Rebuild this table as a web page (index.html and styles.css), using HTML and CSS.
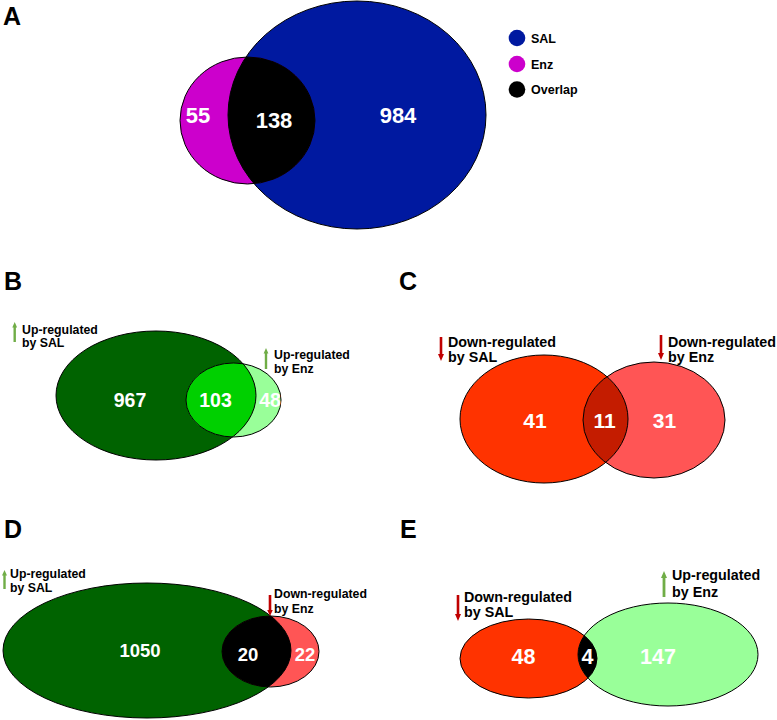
FILE: index.html
```html
<!DOCTYPE html>
<html>
<head>
<meta charset="utf-8">
<link rel="stylesheet" href="styles.css">
</head>
<body>
<div class="figure">
  <section class="panel panel-a">
    <div class="letter letter-a">A</div>
    <svg class="plot" viewBox="0 0 777 255" width="777" height="255">
      <defs>
        <clipPath id="clipA"><ellipse cx="357" cy="115" rx="129" ry="114"/></clipPath>
      </defs>
      <ellipse class="sal-blue" cx="357" cy="115" rx="129" ry="114"/>
      <ellipse class="enz-magenta" cx="247.5" cy="120.5" rx="67.5" ry="63.5"/>
      <ellipse class="ov-black" clip-path="url(#clipA)" cx="247.5" cy="120.5" rx="67.5" ry="63.5"/>
      <ellipse class="edge" cx="357" cy="115" rx="129" ry="114"/>
      <ellipse class="edge" cx="247.5" cy="120.5" rx="67.5" ry="63.5"/>
      <text class="num num-a" x="198" y="123">55</text>
      <text class="num num-a" x="274" y="128">138</text>
      <text class="num num-a" x="398" y="123">984</text>
      <circle class="sal-blue" cx="517" cy="38" r="8.3"/>
      <circle class="enz-magenta" cx="517" cy="64" r="8.3"/>
      <circle class="ov-black" cx="517" cy="89.5" r="8.3"/>
      <text class="legend" x="531" y="43">SAL</text>
      <text class="legend" x="531" y="69">Enz</text>
      <text class="legend" x="531" y="94">Overlap</text>
    </svg>
  </section>

  <section class="panel panel-b">
    <div class="letter letter-b">B</div>
    <svg class="plot" viewBox="0 255 390 248" width="390" height="248">
      <defs>
        <clipPath id="clipB"><ellipse cx="156" cy="395.5" rx="100" ry="64.5"/></clipPath>
      </defs>
      <ellipse class="dark-green" cx="156" cy="395.5" rx="100" ry="64.5"/>
      <ellipse class="light-green" cx="233.5" cy="400" rx="47.5" ry="37"/>
      <ellipse class="bright-green" clip-path="url(#clipB)" cx="233.5" cy="400" rx="47.5" ry="37"/>
      <ellipse class="edge" cx="156" cy="395.5" rx="100" ry="64.5"/>
      <ellipse class="edge" cx="233.5" cy="400" rx="47.5" ry="37"/>
      <text class="num num-b" x="130" y="407">967</text>
      <text class="num num-b" x="215.5" y="407">103</text>
      <text class="num num-b" x="270" y="407">48</text>
      <path class="arrow-up" d="M13.5 342V327.5H12.3L14.7 322L17.1 327.5H15.9V342Z"/>
      <text class="label label-s"><tspan x="22" y="334">Up-regulated</tspan><tspan x="22" y="347">by SAL</tspan></text>
      <path class="arrow-up" d="M264.8 369V353.5H263.6L266 348L268.4 353.5H267.2V369Z"/>
      <text class="label label-s"><tspan x="274" y="359">Up-regulated</tspan><tspan x="274" y="373">by Enz</tspan></text>
    </svg>
  </section>

  <section class="panel panel-c">
    <div class="letter letter-c">C</div>
    <svg class="plot" viewBox="390 255 387 248" width="387" height="248">
      <defs>
        <clipPath id="clipC"><ellipse cx="544" cy="419" rx="84" ry="64"/></clipPath>
      </defs>
      <ellipse class="red" cx="544" cy="419" rx="84" ry="64"/>
      <ellipse class="pink" cx="654" cy="420" rx="71" ry="58"/>
      <ellipse class="dark-red" clip-path="url(#clipC)" cx="654" cy="420" rx="71" ry="58"/>
      <ellipse class="edge" cx="544" cy="419" rx="84" ry="64"/>
      <ellipse class="edge" cx="654" cy="420" rx="71" ry="58"/>
      <text class="num num-c" x="535" y="428">41</text>
      <text class="num num-c" x="604.5" y="428">11</text>
      <text class="num num-c" x="664.5" y="428">31</text>
      <path class="arrow-down" d="M439.7 337V354H438L441 361L444 354H442.3V337Z"/>
      <text class="label label-l"><tspan x="448" y="347">Down-regulated</tspan><tspan x="448" y="362">by SAL</tspan></text>
      <path class="arrow-down" d="M659.7 335V353H658L661 360L664 353H662.3V335Z"/>
      <text class="label label-l"><tspan x="668" y="347">Down-regulated</tspan><tspan x="668" y="362">by Enz</tspan></text>
    </svg>
  </section>

  <section class="panel panel-d">
    <div class="letter letter-d">D</div>
    <svg class="plot" viewBox="0 503 390 217" width="390" height="217">
      <defs>
        <clipPath id="clipD"><ellipse cx="147" cy="650.5" rx="144" ry="67.5"/></clipPath>
      </defs>
      <ellipse class="dark-green" cx="147" cy="650.5" rx="144" ry="67.5"/>
      <ellipse class="pink" cx="270.5" cy="651.5" rx="48.5" ry="35.5"/>
      <ellipse class="ov-black" clip-path="url(#clipD)" cx="270.5" cy="651.5" rx="48.5" ry="35.5"/>
      <ellipse class="edge" cx="147" cy="650.5" rx="144" ry="67.5"/>
      <ellipse class="edge" cx="270.5" cy="651.5" rx="48.5" ry="35.5"/>
      <text class="num num-d" x="140" y="657">1050</text>
      <text class="num num-d" x="248" y="661">20</text>
      <text class="num num-d" x="305" y="661">22</text>
      <path class="arrow-up" d="M3.3 589V575.5H2L4.5 570L7 575.5H5.7V589Z"/>
      <text class="label label-s"><tspan x="10" y="578">Up-regulated</tspan><tspan x="10" y="592">by SAL</tspan></text>
      <path class="arrow-down" d="M268.7 595V610H267.2L270 616L272.8 610H271.3V595Z"/>
      <text class="label label-s"><tspan x="274" y="598">Down-regulated</tspan><tspan x="274" y="613">by Enz</tspan></text>
    </svg>
  </section>

  <section class="panel panel-e">
    <div class="letter letter-e">E</div>
    <svg class="plot" viewBox="390 503 387 217" width="387" height="217">
      <defs>
        <clipPath id="clipE"><ellipse cx="528.5" cy="658.5" rx="68.5" ry="39.5"/></clipPath>
      </defs>
      <ellipse class="red" cx="528.5" cy="658.5" rx="68.5" ry="39.5"/>
      <ellipse class="light-green" cx="668" cy="654.5" rx="90" ry="51.5"/>
      <ellipse class="ov-black" clip-path="url(#clipE)" cx="668" cy="654.5" rx="90" ry="51.5"/>
      <ellipse class="edge" cx="528.5" cy="658.5" rx="68.5" ry="39.5"/>
      <ellipse class="edge" cx="668" cy="654.5" rx="90" ry="51.5"/>
      <text class="num num-e" x="523.5" y="664">48</text>
      <text class="num num-e" x="587.5" y="664">4</text>
      <text class="num num-e" x="658" y="664">147</text>
      <path class="arrow-down" d="M456.7 595V614H455L458 621L461 614H459.3V595Z"/>
      <text class="label label-l"><tspan x="464" y="602">Down-regulated</tspan><tspan x="464" y="617">by SAL</tspan></text>
      <path class="arrow-up" d="M662.6 597V578H661L664 571L667 578H665.4V597Z"/>
      <text class="label label-l"><tspan x="672" y="580">Up-regulated</tspan><tspan x="672" y="597">by Enz</tspan></text>
    </svg>
  </section>
</div>
</body>
</html>
```

FILE: styles.css
```css
html, body {
  margin: 0;
  padding: 0;
  background: #ffffff;
}

.figure {
  width: 777px;
  height: 720px;
  display: grid;
  grid-template-columns: 390px 387px;
  grid-template-rows: 255px 248px 217px;
  font-family: "Liberation Sans", Arial, sans-serif;
  overflow: hidden;
}

.panel {
  display: grid;
  min-width: 0;
  min-height: 0;
}

.panel > * {
  grid-area: 1 / 1;
}

.panel-a {
  grid-column: 1 / 3;
}

.plot {
  display: block;
  overflow: visible;
}

.letter {
  font-size: 25px;
  line-height: 25px;
  font-weight: bold;
  color: #000;
  align-self: start;
  justify-self: start;
  z-index: 1;
}

.letter-a { padding: 4px 0 0 3px; }
.letter-b { padding: 14px 0 0 4px; }
.letter-c { padding: 14px 0 0 9px; }
.letter-d { padding: 14px 0 0 4px; }
.letter-e { padding: 14px 0 0 10px; }

.sal-blue { fill: #0019a0; }
.enz-magenta { fill: #cc00cc; }
.ov-black { fill: #000000; }
.dark-green { fill: #006300; }
.light-green { fill: #99ff99; }
.bright-green { fill: #00d000; }
.red { fill: #ff3300; }
.pink { fill: #ff5555; }
.dark-red { fill: #c41c00; }

.edge {
  fill: none;
  stroke: #000;
  stroke-width: 1;
}

.num {
  fill: #ffffff;
  font-family: "Liberation Sans", Arial, sans-serif;
  font-weight: bold;
  text-anchor: middle;
}

.num-a { font-size: 22px; }
.num-b { font-size: 19.5px; }
.num-c { font-size: 21px; }
.num-d { font-size: 18.5px; }
.num-e { font-size: 21.5px; }

.legend {
  fill: #000;
  font-family: "Liberation Sans", Arial, sans-serif;
  font-weight: bold;
  font-size: 12.5px;
}

.label {
  fill: #000;
  font-family: "Liberation Sans", Arial, sans-serif;
  font-weight: bold;
}

.label-s { font-size: 12.3px; }
.label-l { font-size: 14.3px; }

.arrow-up { fill: #70ad47; }
.arrow-down { fill: #c00000; }
```
